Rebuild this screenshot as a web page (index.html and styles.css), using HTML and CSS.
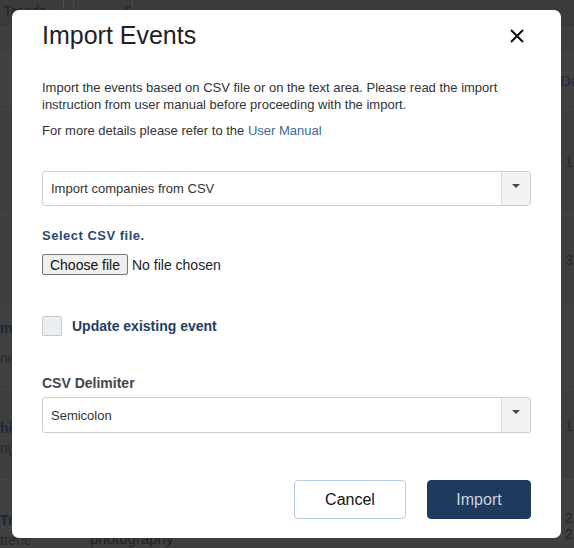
FILE: index.html
```html
<!DOCTYPE html>
<html>
<head>
<meta charset="utf-8">
<link rel="stylesheet" href="styles.css">
</head>
<body>
<div class="page">
  <div class="topbar">
    <div class="tab tab-a">n Trends</div>
    <div class="tab tab-b">Sh</div>
  </div>
  <div class="table">
    <div class="row head"><span class="c-left"></span><span class="c-right">Date</span></div>
    <div class="row r1"><span class="c-left"></span><span class="c-right">1</span></div>
    <div class="row r2"><span class="c-left"></span><span class="c-right">3</span></div>
    <div class="row r3"><span class="c-left"><b>m</b><br><i>ne</i></span><span class="c-right"></span></div>
    <div class="row r4"><span class="c-left"><b>hir</b><br><i>ng</i></span><span class="c-right">1</span></div>
    <div class="row r5"><span class="c-left"><b>Tr</b><br><i>trends</i></span><span class="c-mid">photography</span><span class="c-right">2<br>2</span></div>
  </div>
</div>

<div class="modal">
  <div class="modal-header">
    <h1 class="title">Import Events</h1>
    <button class="close" aria-label="Close">
      <svg width="14" height="14" viewBox="0 0 14 14"><path d="M1 1 L13 13 M13 1 L1 13" stroke="#111" stroke-width="2" fill="none"/></svg>
    </button>
  </div>
  <p class="desc">Import the events based on CSV file or on the text area. Please read the import instruction from user manual before proceeding with the import.</p>
  <p class="desc more">For more details please refer to the <a class="link">User Manual</a></p>

  <div class="select first">
    <span class="sel-text">Import companies from CSV</span>
    <span class="sel-arrow"><span class="caret"></span></span>
  </div>

  <div class="label csv-label">Select CSV file.</div>
  <div class="file-row">
    <span class="file-btn">Choose file</span>
    <span class="file-name">No file chosen</span>
  </div>

  <label class="check-row">
    <span class="checkbox"></span>
    <span class="check-label">Update existing event</span>
  </label>

  <div class="label delim-label">CSV Delimiter</div>
  <div class="select second">
    <span class="sel-text">Semicolon</span>
    <span class="sel-arrow"><span class="caret"></span></span>
  </div>

  <div class="footer">
    <button class="btn cancel">Cancel</button>
    <button class="btn import">Import</button>
  </div>
</div>
</body>
</html>
```

FILE: styles.css
```css
* { box-sizing: border-box; }
html, body { margin: 0; padding: 0; }
body {
  width: 574px;
  height: 548px;
  overflow: hidden;
  background: #3e3e3e;
  font-family: "Liberation Sans", Arial, sans-serif;
}

/* dimmed background page */
.page { width: 574px; height: 548px; overflow: hidden; }
.topbar {
  height: 28px;
  display: flex;
  background: #3b3b3b;
  border-bottom: 1px solid #444;
}
.tab {
  height: 28px;
  border-right: 1px solid #4a4a4a;
  color: #222;
  font-size: 14px;
  line-height: 22px;
  overflow: hidden;
  white-space: nowrap;
}
.tab-a { width: 64px; text-indent: -8px; }
.tab-b { width: 60px; margin-left: 9px; border-left: 1px solid #4a4a4a; padding-left: 50px; }
.table { display: flex; flex-direction: column; }
.row {
  display: flex;
  justify-content: space-between;
  border-top: 1px solid #454545;
  font-size: 14px;
  color: #262626;
}
.head { height: 57px; margin-top: 24px; background: #414141; align-items: center; }
.head .c-right { color: #1d2a3b; font-size: 15px; width: 14px; }
.r1 { height: 105px; align-items: center; }
.r2 { height: 90px; align-items: center; }
.r3 { height: 85px; background: #404040; padding-top: 8px; }
.r4 { height: 90px; padding-top: 28px; }
.r5 { height: 68px; padding-top: 30px; background: #404040; }
.c-left { width: 30px; overflow: hidden; line-height: 20px; white-space: nowrap; }
.r3 .c-left { line-height: 30px; }
.c-left b { color: #1b2839; }
.c-left i { font-style: normal; color: #2a2a2a; }
.c-right { width: 9px; overflow: hidden; line-height: 16px; }
.c-mid { flex: 1; padding-left: 60px; padding-top: 20px; color: #222; font-size: 15px; }

/* modal */
.modal {
  position: fixed;
  left: 12px;
  top: 10px;
  width: 549px;
  height: 528px;
  background: #fff;
  border-radius: 7px;
  padding: 11px 30px 19px 30px;
  display: flex;
  flex-direction: column;
}
.modal-header {
  display: flex;
  justify-content: space-between;
  align-items: center;
  height: 28px;
}
.title {
  margin: 0;
  font-weight: normal;
  font-size: 25px;
  line-height: 28px;
  color: #222;
}
.close {
  border: 0;
  background: none;
  padding: 0;
  width: 14px;
  height: 14px;
  margin-right: 7px;
  margin-top: 2px;
  display: flex;
}
.desc {
  margin: 30px 0 0 0;
  font-size: 13px;
  line-height: 17px;
  color: #333;
}
.desc.more { margin-top: 9px; }
.link { color: #3d6a98; text-decoration: none; }

.select {
  display: flex;
  height: 35px;
  border: 1px solid #cfcfcf;
  border-radius: 3px;
  font-size: 13px;
  color: #333;
}
.select.first { margin-top: 32px; }
.select.second { margin-top: 5px; height: 36px; }
.sel-text { flex: 1; padding-left: 8px; display: flex; align-items: center; }
.sel-arrow {
  width: 29px;
  background: #f2f2f2;
  border-left: 1px solid #dcdcdc;
  display: flex;
  justify-content: center;
  padding-top: 12px;
}
.caret {
  width: 0; height: 0;
  border-left: 4px solid transparent;
  border-right: 4px solid transparent;
  border-top: 4px solid #444;
}

.label { font-weight: bold; }
.csv-label {
  margin-top: 21px;
  font-size: 13px;
  line-height: 17px;
  color: #284a72;
  letter-spacing: 0.5px;
}
.file-row {
  margin-top: 10px;
  display: flex;
  align-items: center;
  height: 21px;
  font-size: 14px;
}
.file-btn {
  height: 21px;
  width: 86px;
  border: 1px solid #767676;
  border-radius: 2px;
  background: #efefef;
  color: #111;
  display: flex;
  align-items: center;
  justify-content: center;
}
.file-name { margin-left: 4px; color: #222; }

.check-row {
  margin-top: 41px;
  display: flex;
  align-items: center;
  height: 20px;
}
.checkbox {
  width: 20px;
  height: 20px;
  background: #eceff1;
  border: 1px solid #c8cbce;
  border-radius: 1px;
}
.check-label {
  margin-left: 10px;
  font-size: 14px;
  font-weight: bold;
  line-height: 20px;
  color: #1f3d63;
}
.delim-label {
  margin-top: 39px;
  font-size: 14px;
  line-height: 17px;
  color: #3f454e;
}

.footer {
  margin-top: auto;
  display: flex;
  justify-content: flex-end;
  gap: 21px;
}
.btn {
  height: 39px;
  border-radius: 4px;
  font-family: "Liberation Sans", Arial, sans-serif;
  font-size: 16px;
  padding: 0;
}
.cancel {
  width: 112px;
  background: #fff;
  border: 1px solid #b6cce6;
  color: #111;
}
.import {
  width: 104px;
  background: #1e3a5c;
  border: 1px solid #1e3a5c;
  color: #c6d4e4;
}
```
